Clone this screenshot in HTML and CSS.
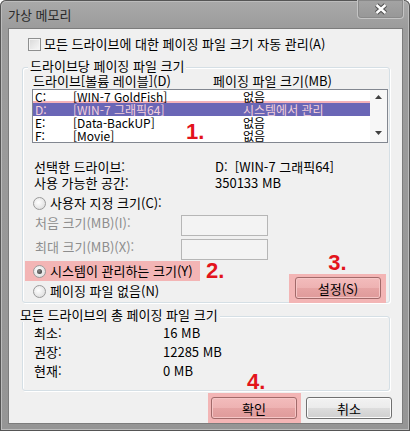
FILE: index.html
```html
<!DOCTYPE html>
<html lang="ko">

<head>
    <meta charset="UTF-8">
    <meta name="viewport" content="width=device-width, initial-scale=1.0">
    <title>가상 메모리</title>
    <link rel="stylesheet" href="styles.css">
</head>

<body>
    <div class="window">
        <div class="titlebar">
            <span class="title">가상 메모리</span>
            <div class="close-btn">
                <svg width="14" height="12" viewBox="0 0 14 12">
                    <path d="M2.5 2 L11.5 10 M11.5 2 L2.5 10" stroke="#505050" stroke-width="4.6" />
                    <path d="M2.5 2 L11.5 10 M11.5 2 L2.5 10" stroke="#ffffff" stroke-width="2.4" />
                </svg>
            </div>
        </div>

        <div class="client">
            <label class="check-row"><span class="checkbox"></span>모든 드라이브에 대한 페이징 파일 크기 자동 관리(A)</label>

            <div class="group group-drive">
                <div class="group-title">드라이브당 페이징 파일 크기</div>
                <div class="list-head">
                    <span class="col-drive">드라이브[볼륨 레이블](D)</span>
                    <span>페이징 파일 크기(MB)</span>
                </div>

                <div class="listbox">
                    <div class="rows">
                        <div class="row"><span class="c-letter">C:</span><span class="c-label">[WIN-7 GoldFish]</span><span>없음</span></div>
                        <div class="row selected"><span class="c-letter">D:</span><span class="c-label">[WIN-7 그래픽64]</span><span>시스템에서 관리</span></div>
                        <div class="row"><span class="c-letter">E:</span><span class="c-label">[Data-BackUP]</span><span>없음</span></div>
                        <div class="row"><span class="c-letter">F:</span><span class="c-label">[Movie]</span><span>없음</span></div>
                    </div>
                    <div class="scrollbar">
                        <svg width="7" height="4" viewBox="0 0 7 4"><path d="M0 4 L3.5 0 L7 4 Z" fill="#404040" /></svg>
                        <svg width="7" height="4" viewBox="0 0 7 4"><path d="M0 0 L7 0 L3.5 4 Z" fill="#404040" /></svg>
                    </div>
                    <span class="mark mark-1">1.</span>
                </div>

                <div class="info">
                    <div class="info-row"><span class="info-label">선택한 드라이브:</span><span>D:&nbsp;&nbsp;[WIN-7 그래픽64]</span></div>
                    <div class="info-row"><span class="info-label">사용 가능한 공간:</span><span>350133 MB</span></div>
                </div>

                <div class="options">
                    <div class="opt-left">
                        <div class="radio-row"><span class="radio"></span>사용자 지정 크기(C):</div>
                        <div class="field-row first">
                            <span class="field-label">처음 크기(MB)(I):</span>
                            <span class="field"></span>
                        </div>
                        <div class="field-row">
                            <span class="field-label">최대 크기(MB)(X):</span>
                            <span class="field"></span>
                        </div>
                        <div class="sys-row">
                            <div class="radio-row marked"><span class="radio on"></span>시스템이 관리하는 크기(Y)</div>
                            <span class="mark">2.</span>
                        </div>
                        <div class="radio-row none-row"><span class="radio"></span>페이징 파일 없음(N)</div>
                    </div>
                    <div class="opt-right">
                        <span class="mark">3.</span>
                        <div class="btn-mark set-mark"><button class="btn btn-pink">설정(S)</button></div>
                    </div>
                </div>
            </div>

            <div class="group group-total">
                <div class="group-title">모든 드라이브의 총 페이징 파일 크기</div>
                <div class="total-row first"><span class="total-label">최소:</span><span>16 MB</span></div>
                <div class="total-row"><span class="total-label">권장:</span><span>12285 MB</span></div>
                <div class="total-row"><span class="total-label">현재:</span><span>0 MB</span></div>
                <span class="mark mark-4">4.</span>
            </div>

            <div class="actions">
                <div class="btn-mark ok-mark"><button class="btn btn-pink">확인</button></div>
                <button class="btn cancel">취소</button>
            </div>
        </div>
    </div>
</body>

</html>
```

FILE: styles.css
```css
* {
    margin: 0;
    padding: 0;
    box-sizing: border-box;
}

body {
    background-color: #ffffff;
    font-family: "Noto Sans CJK KR", "Noto Sans", sans-serif;
    font-size: 13px;
    color: #000;
}

.window {
    width: 410px;
    height: 431px;
    display: flex;
    flex-direction: column;
    border-radius: 6px 6px 0 0;
    background: linear-gradient(#aaaaaa, #9c9c9c 28px, #959595);
    box-shadow: inset 0 0 0 1px #555555, inset 0 0 0 2px #bcbcbc;
}

.titlebar {
    height: 28px;
    display: flex;
    justify-content: space-between;
    align-items: flex-start;
}

.title {
    margin: 8px 0 0 8px;
    line-height: 14px;
    color: #2a2a2a;
}

.close-btn {
    width: 47px;
    height: 19px;
    margin-right: 6px;
    display: flex;
    align-items: center;
    justify-content: center;
    border: 1px solid #c4c4c4;
    border-top: none;
    border-radius: 0 0 4px 4px;
    background: linear-gradient(#a4a4a4, #979797);
    box-shadow: inset 0 0 0 1px #8a8a8a;
}

.client {
    width: 395px;
    height: 396px;
    margin-left: 8px;
    display: flex;
    flex-direction: column;
    background-color: #f0f0f0;
    border: 1px solid #7c7c7c;
}

.check-row {
    margin: 8px 0 0 19px;
    height: 14px;
    line-height: 14px;
    display: flex;
    align-items: center;
}

.checkbox {
    width: 13px;
    height: 13px;
    margin-right: 3px;
    border: 1px solid #8e8f8f;
    background: linear-gradient(135deg, #d8d8d8, #f8f8f8);
    box-shadow: inset 0 0 0 1px #f4f4f4;
}

.group {
    position: relative;
    margin-left: 13px;
    width: 368px;
    display: flex;
    flex-direction: column;
    border: 1px solid #d5dfe5;
    border-radius: 3px;
    box-shadow: inset 1px 1px 0 #ffffff, 1px 1px 0 #ffffff;
}

.group-title {
    align-self: flex-start;
    margin: -9px 0 0 -5px;
    padding: 0 2px;
    line-height: 14px;
    background-color: #f0f0f0;
}

.group-drive {
    margin-top: 16px;
    height: 236px;
    padding-left: 10px;
}

.list-head {
    margin-top: 1px;
    line-height: 14px;
    display: flex;
}

.col-drive {
    width: 180px;
}

.listbox {
    position: relative;
    margin: 1px 0 0 -1px;
    width: 356px;
    height: 54px;
    display: flex;
    border: 1px solid #828790;
    background-color: #ffffff;
    font-size: 12px;
}

.rows {
    flex: 1;
}

.row {
    height: 13px;
    line-height: 13px;
    padding-left: 2px;
    display: flex;
    white-space: nowrap;
}

.row.selected {
    background-color: #6a66b6;
    color: #f3cfdb;
    box-shadow: 0 -2px 0 #f4b2ba;
}

.c-letter {
    width: 38px;
}

.c-label {
    width: 170px;
}

.scrollbar {
    width: 17px;
    display: flex;
    flex-direction: column;
    justify-content: space-between;
    align-items: center;
    padding: 5px 0 7px;
    background-color: #f7f7f7;
}

.mark {
    font-family: "Liberation Sans", Arial, sans-serif;
    font-weight: bold;
    font-size: 22px;
    line-height: 22px;
    color: #e3141b;
}

.mark-1 {
    position: absolute;
    left: 153px;
    top: 31px;
}

.info {
    margin-top: 17px;
}

.info-row {
    line-height: 14px;
    display: flex;
}

.info-row + .info-row {
    margin-top: 2px;
}

.info-label {
    width: 182px;
    padding-left: 1px;
}

.options {
    margin-top: 6px;
    display: flex;
}

.opt-left {
    display: flex;
    flex-direction: column;
    padding-bottom: 5px;
}

.radio-row {
    line-height: 14px;
    display: flex;
    align-items: center;
}

.radio {
    width: 13px;
    height: 13px;
    margin-right: 4px;
    display: flex;
    align-items: center;
    justify-content: center;
    border: 1px solid #9a9a9a;
    border-radius: 50%;
    background: radial-gradient(circle at 40% 40%, #ffffff, #d6d6d6);
}

.radio.on::after {
    content: '';
    width: 5px;
    height: 5px;
    border-radius: 50%;
    background: radial-gradient(circle at 40% 40%, #8a8a8a, #2c2c2c);
}

.field-row {
    margin-top: 3px;
    height: 21px;
    display: flex;
    align-items: flex-start;
}

.field-row.first {
    margin-top: 5px;
}

.field-label {
    width: 148px;
    padding-left: 2px;
    line-height: 16px;
    color: #8d8d8d;
}

.field {
    width: 87px;
    height: 21px;
    border: 1px solid #b6b6b6;
    background-color: #f3f3f3;
}

.sys-row {
    display: flex;
    align-items: center;
}

.radio-row.marked {
    margin-left: -8px;
    padding-left: 8px;
    width: 175px;
    height: 20px;
    line-height: 20px;
    background-color: #f3b5b5;
}

.sys-row .mark {
    margin-left: 6px;
}

.radio-row.none-row {
    margin-top: 2px;
}

.opt-right {
    margin: 0 3px 0 auto;
    display: flex;
    flex-direction: column;
    justify-content: flex-end;
    align-items: center;
}

.btn-mark {
    background-color: #f3b5b5;
}

.set-mark {
    width: 97px;
    height: 29px;
    padding: 3px 5px 0 6px;
}

.btn {
    font-family: "Noto Sans CJK KR", "Noto Sans", sans-serif;
    font-size: 13px;
    color: #000;
    height: 22px;
    border: 1px solid #707070;
    border-radius: 3px;
    background: linear-gradient(#f2f2f2, #ebebeb 50%, #dddddd 50%, #cfcfcf);
    box-shadow: inset 0 0 0 1px #fcfcfc;
}

.btn-pink {
    width: 86px;
    border-color: #a26a6a;
    background: linear-gradient(#f3bcbc, #eeb2b2 50%, #e6a4a4 50%, #df9a9a);
    box-shadow: inset 0 0 0 1px #f6c6c6;
}

.group-total {
    margin-top: 13px;
    height: 75px;
}

.total-row {
    line-height: 19px;
    padding-left: 11px;
    display: flex;
}

.total-row.first {
    margin-top: 1px;
}

.total-label {
    width: 129px;
}

.mark-4 {
    position: absolute;
    left: 224px;
    top: 54px;
}

.actions {
    margin-top: 2px;
    padding-right: 10px;
    display: flex;
    justify-content: flex-end;
    align-items: flex-start;
}

.ok-mark {
    width: 93px;
    height: 30px;
    padding: 4px 3px 0 3px;
}

.cancel {
    width: 86px;
    margin: 4px 0 0 5px;
}
```
